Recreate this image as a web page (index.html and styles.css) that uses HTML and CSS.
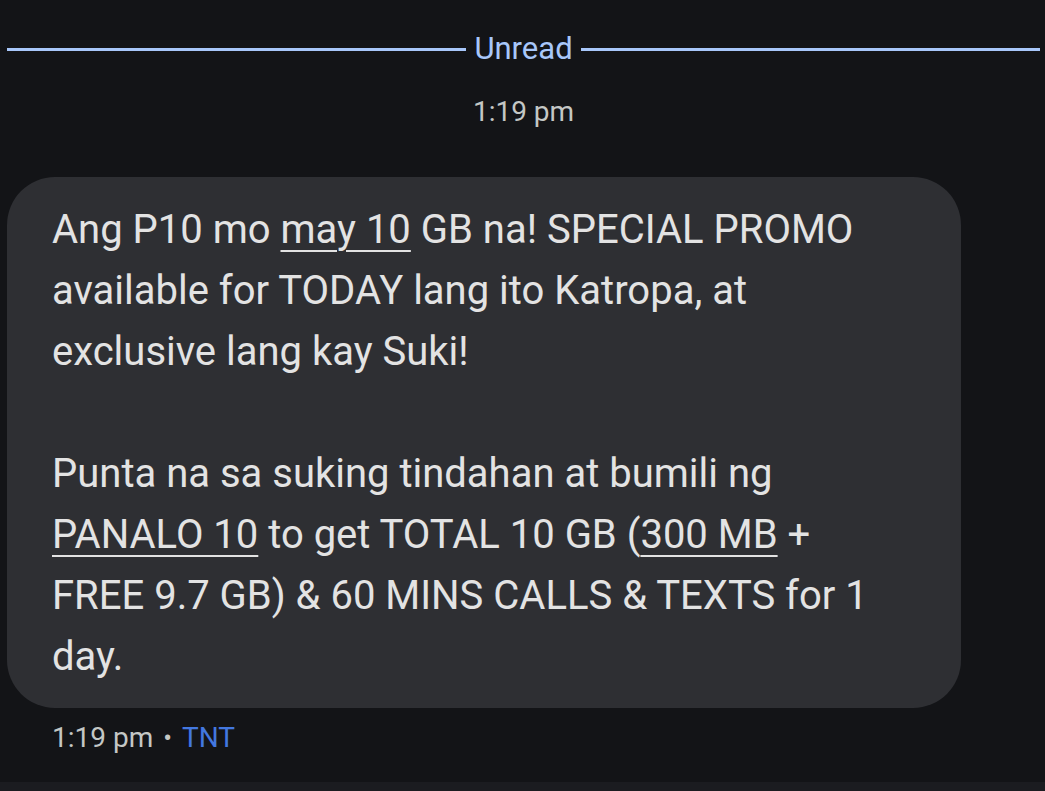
FILE: index.html
```html
<!DOCTYPE html>
<html lang="en">
<head>
  <meta charset="UTF-8" />
  <meta name="viewport" content="width=device-width, initial-scale=1" />
  <title>TNT</title>
  <link rel="stylesheet" href="styles.css">
</head>
<body>

  <main class="thread">
    <div class="unread">
      <span class="unread-line"></span>
      <span class="unread-label">Unread</span>
      <span class="unread-line"></span>
    </div>

    <p class="stamp">1:19 pm</p>

    <div class="bubble">
      <p>Ang P10 mo <u>may 10</u> GB na! SPECIAL PROMO available for TODAY lang ito Katropa, at exclusive lang kay Suki!</p>
      <p class="gap">Punta na sa suking tindahan at bumili ng <u>PANALO 10</u> to get TOTAL 10 GB (<u>300 MB</u> + FREE 9.7 GB) &amp; 60 MINS CALLS &amp; TEXTS for 1 day.</p>
    </div>

    <div class="meta">
      <span>1:19 pm</span>
      <span class="dot">&bull;</span>
      <span class="sender">TNT</span>
    </div>
  </main>

  <footer class="compose"></footer>

</body>
</html>
```

FILE: styles.css
```css
:root {
  --bg: #131417;
  --bubble: #2e2f33;
  --text: #e3e3e3;
  --muted: #c4c7c5;
  --accent: #a8c7fa;
  --link: #4378e0;
}

html, body {
  height: 100%;
}

body {
  margin: 0;
  background: var(--bg);
  font-family: 'Roboto', 'Noto Sans', sans-serif;
  color: var(--text);
  display: flex;
  flex-direction: column;
  overflow: hidden;
}

.thread {
  flex: 1;
  padding: 0 5px 0 7px;
}

/* Unread-Trenner */
.unread {
  display: flex;
  align-items: center;
  gap: 8px;
  margin-top: 31px;
}

.unread-line {
  flex: 1;
  height: 3px;
  background: var(--accent);
}

.unread-label {
  font-size: 31px;
  line-height: 36px;
  color: var(--accent);
}

.stamp {
  margin: 28px 0 0;
  text-align: center;
  font-size: 28px;
  line-height: 34px;
  color: var(--muted);
}

/* Nachricht */
.bubble {
  width: 954px;
  box-sizing: border-box;
  margin-top: 48px;
  padding: 22px 69px 21px 45px;
  background: var(--bubble);
  border-radius: 48px;
  font-size: 40px;
  line-height: 61px;
}

.bubble p {
  margin: 0;
}

.bubble .gap {
  margin-top: 61px;
}

.bubble u {
  text-decoration-thickness: 2px;
  text-underline-offset: 7px;
}

.meta {
  display: flex;
  align-items: center;
  gap: 10px;
  margin-top: 13px;
  padding-left: 45px;
  font-size: 28px;
  line-height: 34px;
  color: var(--muted);
}

.meta .dot {
  font-size: 26px;
}

.meta .sender {
  color: var(--link);
}

.compose {
  height: 9px;
  background: #1b1c20;
}
```
